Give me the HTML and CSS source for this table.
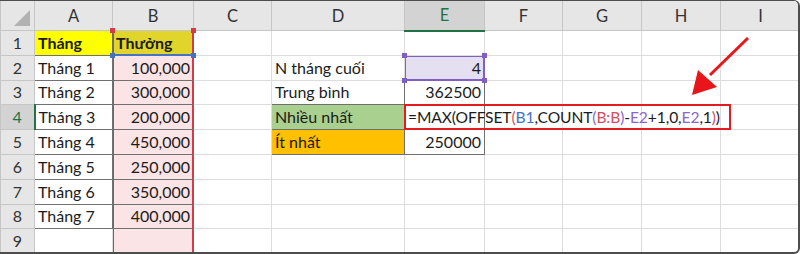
FILE: index.html
```html
<!DOCTYPE html>
<html lang="vi">
<head>
  <meta charset="UTF-8"/>
  <title>Hàm OFFSET - Nhiều nhất</title>
  <link rel="stylesheet" href="styles.css">
</head>
<body>

  <div class="sheet">
    <table class="grid">
      <colgroup>
        <col class="w-hdr"><col class="w-a"><col class="w-b"><col class="w-c"><col class="w-d">
        <col class="w-e"><col class="w-f"><col class="w-g"><col class="w-h"><col class="w-i">
      </colgroup>
      <tr class="col-heads">
        <th class="corner"><span class="tri"></span></th>
        <th>A</th><th>B</th><th>C</th><th>D</th>
        <th class="active-col">E</th><th>F</th><th>G</th><th>H</th><th>I</th>
      </tr>
      <tr>
        <th class="row-head">1</th>
        <td class="box head-yellow">Tháng</td>
        <td class="box ref-col head-olive">
          Thưởng
          <span class="ref-blue-line"></span>
          <span class="dot red tl"></span><span class="dot red tr"></span>
          <span class="dot blue bl"></span><span class="dot blue br"></span>
        </td>
        <td></td><td></td><td></td><td></td><td></td><td></td><td></td>
      </tr>
      <tr>
        <th class="row-head">2</th>
        <td class="box">Tháng 1</td><td class="box ref-col num">100,000</td>
        <td></td>
        <td>N tháng cuối</td>
        <td class="num ref-purple">
          4
          <span class="dot purple tl"></span><span class="dot purple tr"></span>
          <span class="dot purple bl"></span><span class="dot purple br"></span>
        </td>
        <td></td><td></td><td></td><td></td>
      </tr>
      <tr>
        <th class="row-head">3</th>
        <td class="box">Tháng 2</td><td class="box ref-col num">300,000</td>
        <td></td>
        <td class="box">Trung bình</td><td class="box num">362500</td>
        <td></td><td></td><td></td><td></td>
      </tr>
      <tr>
        <th class="row-head active-row">4</th>
        <td class="box">Tháng 3</td><td class="box ref-col num">200,000</td>
        <td></td>
        <td class="box fill-green">Nhiều nhất</td>
        <td class="box editing"><span class="formula">=MAX(OFFSET<span class="f-red">(</span><span class="f-blue">B1</span>,COUNT<span class="f-purple">(</span><span class="f-red">B:B</span><span class="f-purple">)</span>-<span class="f-purple">E2</span>+1,0,<span class="f-purple">E2</span>,1<span class="f-red">)</span>)</span><span class="edit-box"></span></td>
        <td></td><td></td><td></td><td></td>
      </tr>
      <tr>
        <th class="row-head">5</th>
        <td class="box">Tháng 4</td><td class="box ref-col num">450,000</td>
        <td></td>
        <td class="box fill-orange">Ít nhất</td><td class="box num">250000</td>
        <td></td><td></td><td></td><td></td>
      </tr>
      <tr>
        <th class="row-head">6</th>
        <td class="box">Tháng 5</td><td class="box ref-col num">250,000</td>
        <td></td><td></td><td></td><td></td><td></td><td></td><td></td>
      </tr>
      <tr>
        <th class="row-head">7</th>
        <td class="box">Tháng 6</td><td class="box ref-col num">350,000</td>
        <td></td><td></td><td></td><td></td><td></td><td></td><td></td>
      </tr>
      <tr>
        <th class="row-head">8</th>
        <td class="box">Tháng 7</td><td class="box ref-col num">400,000</td>
        <td></td><td></td><td></td><td></td><td></td><td></td><td></td>
      </tr>
      <tr>
        <th class="row-head">9</th>
        <td></td><td class="ref-col"></td>
        <td></td><td></td><td></td><td></td><td></td><td></td><td></td>
      </tr>
    </table>

    <!-- pointer to the formula cell -->
    <svg class="arrow" width="70" height="70" viewBox="0 0 70 70">
      <line x1="60" y1="3" x2="22" y2="40" stroke="#e8161b" stroke-width="3"/>
      <polygon points="4,60 10,35 29,52" fill="#e8161b"/>
    </svg>
  </div>

</body>
</html>
```

FILE: styles.css
```css
body {
  margin: 0;
  background-color: #fff;
}
.sheet {
  position: relative;
  width: 800px;
  height: 254px;
  overflow: hidden;
  box-sizing: border-box;
  border-top: 1px solid #4d4d4d;
  border-bottom: 2px solid #4d4d4d;
  border-right: 2px solid #4d4d4d;
  border-radius: 0 6px 6px 0;
  font-family: Lato, "Open Sans", sans-serif;
  font-size: 16px;
  color: #1b1b1b;
}
.grid {
  table-layout: fixed;
  border-collapse: collapse;
  width: 800px;
  margin-top: -1px;
}
.w-hdr { width: 34px; }
.w-a { width: 78px; }
.w-b { width: 81px; }
.w-c { width: 78px; }
.w-d { width: 133px; }
.w-e { width: 80px; }
.w-f { width: 78px; }
.w-g { width: 79px; }
.w-h { width: 79px; }
.w-i { width: 80px; }

/* headers */
.col-heads th {
  height: 30px;
  box-sizing: border-box;
  background-color: #e6e6e6;
  border: 1px solid #c6c6c6;
  font-weight: normal;
  color: #333;
  font-size: 16.5px;
  line-height: 20px;
  padding: 0;
}
.col-heads th.active-col {
  background-color: #d3d3d3;
  color: #217346;
  border-bottom: 2px solid #217346;
}
.corner {
  position: relative;
}
.tri {
  position: absolute;
  right: 4px;
  bottom: 4px;
  width: 0;
  height: 0;
  border-left: 16px solid transparent;
  border-bottom: 16px solid #b2b2b2;
}
.row-head {
  background-color: #e6e6e6;
  border: 1px solid #c6c6c6;
  font-weight: normal;
  color: #333;
  padding: 0;
  text-align: center;
}
.row-head.active-row {
  background-color: #d3d3d3;
  color: #217346;
  border-right: 2px solid #217346;
}

/* cells */
.grid td,
.grid .row-head {
  height: 24.8px;
  box-sizing: border-box;
  line-height: 20px;
}
.grid td {
  padding: 0 3px;
  border: 1px solid #dcdcdc;
  white-space: nowrap;
  vertical-align: middle;
  position: relative;
}
.grid td.box {
  border: 1px solid #707070;
}
.grid td.num {
  text-align: right;
}
.head-yellow {
  background-color: #ffff00;
  font-weight: bold;
}
.head-olive {
  font-weight: bold;
}
.grid td.ref-col {
  background-color: #fbe4e5;
  box-shadow: inset 1px 0 0 #d63a4a, inset -1px 0 0 #d63a4a;
  border-left-color: #d63a4a;
  border-right-color: #d63a4a;
}
.grid td.head-olive {
  background-color: #e1d52b;
}
.ref-blue-line {
  position: absolute;
  left: 0;
  right: 0;
  bottom: -1px;
  height: 2px;
  background-color: #4472c4;
}
.grid td.ref-purple {
  background-color: #e5e0f1;
  border: 1px solid #7f5fc4;
  box-shadow: inset 0 0 0 1px #7f5fc4;
}
.fill-green {
  background-color: #a9d08e;
}
.fill-orange {
  background-color: #ffc000;
}

/* reference handles */
.dot {
  position: absolute;
  width: 5px;
  height: 5px;
  z-index: 2;
}
.dot.red { background-color: #d63a4a; }
.dot.blue { background-color: #4472c4; }
.dot.purple { background-color: #7f5fc4; }
.tl { left: -3px; top: -3px; }
.tr { right: -3px; top: -3px; }
.bl { left: -3px; bottom: -3px; }
.br { right: -3px; bottom: -3px; }

/* formula being edited */
.editing {
  overflow: visible;
}
.formula {
  font-size: 15.6px;
  letter-spacing: -0.1px;
}
.edit-box {
  position: absolute;
  left: -1px;
  top: -1px;
  width: 323px;
  height: 22px;
  border: 2px solid #e31b23;
  z-index: 3;
}
.f-blue { color: #4472c4; }
.f-red { color: #d05062; }
.f-purple { color: #8a66cc; }

.arrow {
  position: absolute;
  left: 688px;
  top: 34px;
}
```
